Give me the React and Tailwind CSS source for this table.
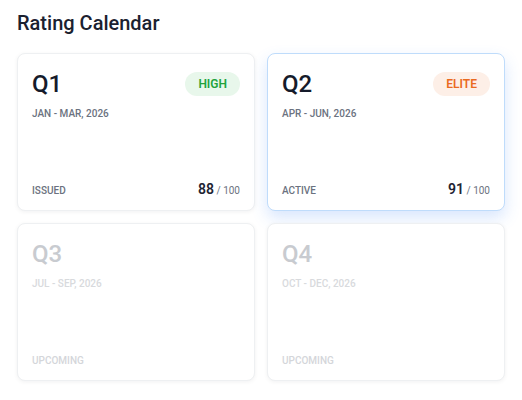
import React from "react";

const quarters = [
  { q: "Q1", range: "JAN - MAR, 2026", status: "ISSUED", score: 88, badge: "HIGH", tone: "high" },
  { q: "Q2", range: "APR - JUN, 2026", status: "ACTIVE", score: 91, badge: "ELITE", tone: "elite", active: true },
  { q: "Q3", range: "JUL - SEP, 2026", status: "UPCOMING" },
  { q: "Q4", range: "OCT - DEC, 2026", status: "UPCOMING" },
];

const Badge = ({ label, tone }) => {
  const colors =
    tone === "elite"
      ? "bg-[#fdefe7] text-[#ea6a1f]"
      : "bg-[#e8f7eb] text-[#22a33c]";
  return (
    <span className={`h-6 px-[13px] rounded-full flex items-center text-xs font-semibold ${colors}`}>
      {label}
    </span>
  );
};

const QuarterCard = ({ item }) => {
  const upcoming = !item.score;

  const cardStyle = item.active
    ? "border-[#bfdcfb] shadow-[0_7px_16px_rgba(59,130,246,0.2)]"
    : "border-[#eef0f2] shadow-[0_1px_4px_rgba(15,23,42,0.06)]";

  return (
    <div className={`h-[158px] bg-white rounded-lg border flex flex-col px-[14px] pt-[14px] pb-[11px] ${cardStyle}`}>
      <div className="flex items-center justify-between">
        <span className={`text-2xl leading-8 font-medium ${upcoming ? "text-[#c8cbd0]" : "text-[#151b2b]"}`}>
          {item.q}
        </span>
        {item.badge && <Badge label={item.badge} tone={item.tone} />}
      </div>
      <div className={`mt-[6px] text-[10px] leading-4 font-medium ${upcoming ? "text-[#d8dadd]" : "text-[#6b7280]"}`}>
        {item.range}
      </div>

      <div className="mt-auto flex items-baseline justify-between leading-none">
        <span className={`text-[10px] font-medium ${upcoming ? "text-[#d4d6da]" : "text-[#6b7280]"}`}>
          {item.status}
        </span>
        {/* keep the row height even when there is no score yet */}
        <span className={upcoming ? "invisible" : ""}>
          <span className="text-sm font-semibold text-[#1f2433]">{item.score ?? 0}</span>
          <span className="text-[10px] text-[#6b7280]"> / 100</span>
        </span>
      </div>
    </div>
  );
};

export default function App() {
  return (
    <div className="min-h-screen bg-white px-[17px] pt-[9px] font-['Roboto','Liberation_Sans',sans-serif]">
      <h1 className="text-xl leading-7 font-medium text-[#1b2130] mb-4">Rating Calendar</h1>

      <div className="grid grid-cols-2 gap-3">
        {quarters.map((item) => (
          <QuarterCard key={item.q} item={item} />
        ))}
      </div>
    </div>
  );
}
